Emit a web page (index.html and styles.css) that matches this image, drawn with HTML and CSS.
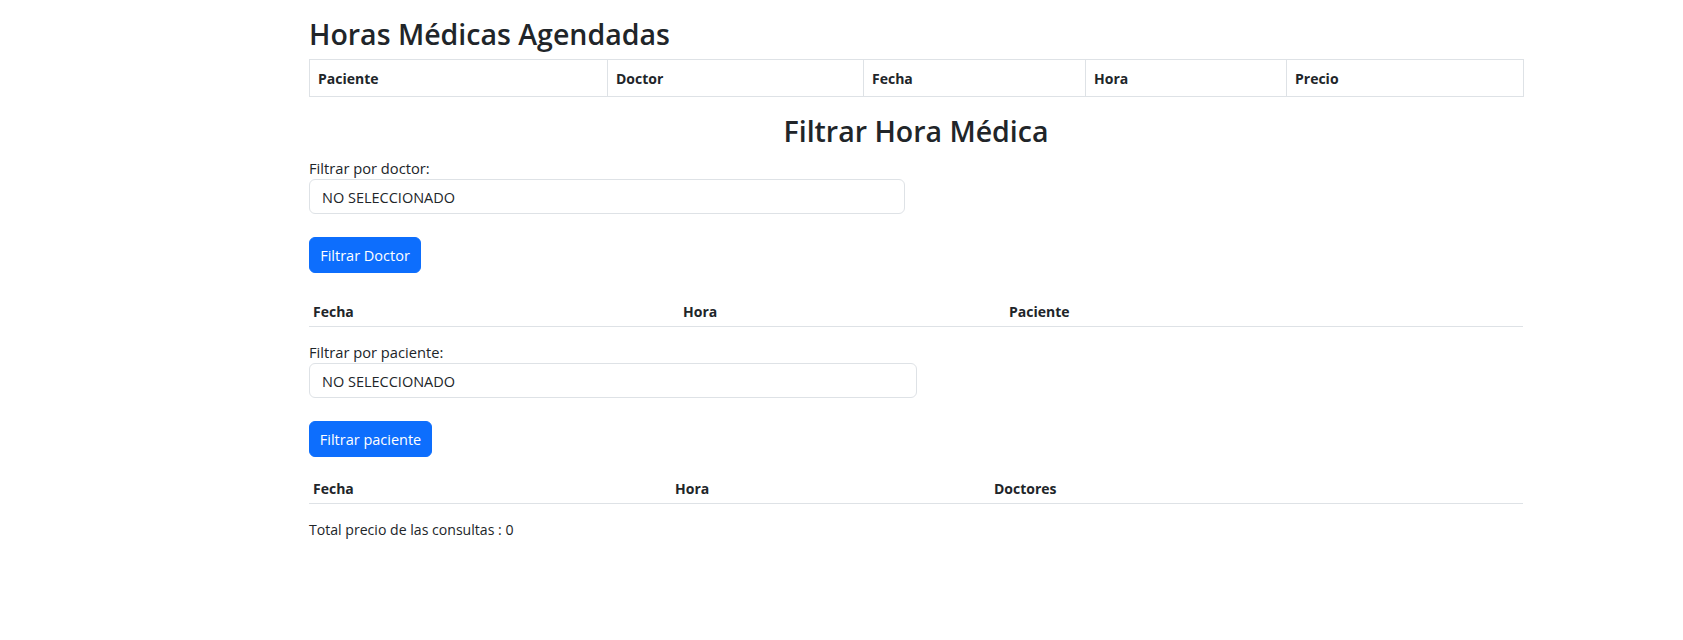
FILE: index.html
```html
<!DOCTYPE html>
<html lang="es">
<head>
<meta charset="utf-8">
<title>Horas Médicas</title>
<link rel="stylesheet" href="styles.css">
</head>
<body>
<div class="container">
  <h3 class="title">Horas Médicas Agendadas</h3>
  <table class="tbl tbl-bordered">
    <colgroup>
      <col class="c1"><col class="c2"><col class="c3"><col class="c4"><col class="c5">
    </colgroup>
    <thead>
      <tr><th>Paciente</th><th>Doctor</th><th>Fecha</th><th>Hora</th><th>Precio</th></tr>
    </thead>
  </table>

  <h2 class="subtitle">Filtrar Hora Médica</h2>

  <label class="lbl">Filtrar por doctor:</label>
  <div class="select select-doctor">NO SELECCIONADO</div>
  <button class="btn btn-doctor">Filtrar Doctor</button>

  <table class="tbl tbl-sm tbl-doctor">
    <colgroup>
      <col class="d1"><col class="d2"><col class="d3">
    </colgroup>
    <thead>
      <tr><th>Fecha</th><th>Hora</th><th>Paciente</th></tr>
    </thead>
  </table>

  <label class="lbl lbl-2">Filtrar por paciente:</label>
  <div class="select select-paciente">NO SELECCIONADO</div>
  <button class="btn btn-paciente">Filtrar paciente</button>

  <table class="tbl tbl-sm tbl-paciente">
    <colgroup>
      <col class="p1"><col class="p2"><col class="p3">
    </colgroup>
    <thead>
      <tr><th>Fecha</th><th>Hora</th><th>Doctores</th></tr>
    </thead>
  </table>

  <p class="total">Total precio de las consultas : 0</p>
</div>
</body>
</html>
```
FILE: styles.css
```css
* { box-sizing: border-box; }

html, body {
  margin: 0;
  padding: 0;
  background: #ffffff;
}

body {
  font-family: "Open Sans", "Noto Sans", "Liberation Sans", sans-serif;
  font-size: 14.5px;
  color: #212529;
}

.container {
  display: flex;
  flex-direction: column;
  align-items: flex-start;
  width: 1214px;
  margin-left: 309px;
}

.title {
  font-size: 28.5px;
  line-height: 34px;
  font-weight: 600;
  margin: 17px 0 8px 0;
}

.tbl {
  width: 100%;
  border-collapse: collapse;
  table-layout: fixed;
}

.tbl th {
  text-align: left;
  font-weight: 700;
  font-size: 14px;
  white-space: nowrap;
}

.tbl-bordered {
  border: 1px solid #dee2e6;
}

.tbl-bordered th {
  border: 1px solid #dee2e6;
  padding: 9px 8px 7px 8px;
  line-height: 20px;
}

.c1 { width: 298px; }
.c2 { width: 256px; }
.c3 { width: 222px; }
.c4 { width: 201px; }
.c5 { width: 237px; }

.subtitle {
  align-self: stretch;
  text-align: center;
  font-size: 28.5px;
  line-height: 34px;
  font-weight: 600;
  margin: 17px 0 9px 0;
}

.lbl {
  display: block;
  font-size: 14.7px;
  line-height: 22px;
}

.lbl-2 {
  margin-top: 14px;
}

.select {
  height: 35px;
  border: 1px solid #dee2e6;
  border-radius: 6px;
  padding: 1px 12px 0 12px;
  display: flex;
  align-items: center;
  font-size: 14.5px;
  color: #212529;
  background: #fff;
  white-space: nowrap;
}

.select-doctor { width: 596px; }
.select-paciente { width: 608px; }

.btn {
  margin-top: 23px;
  height: 36px;
  padding: 1px 0 0 0;
  border: 1px solid #0d6efd;
  border-radius: 6px;
  background: #0d6efd;
  color: #ffffff;
  font-family: inherit;
  font-size: 14.5px;
  line-height: 20px;
  text-align: center;
  white-space: nowrap;
  cursor: pointer;
}

.btn-doctor { width: 112px; }
.btn-paciente { width: 123px; }

.tbl-sm th {
  padding: 5px 4px 3px 4px;
  line-height: 22px;
  border-bottom: 1px solid #dee2e6;
}

.tbl-doctor { margin-top: 23px; }
.tbl-paciente { margin-top: 16px; }

.d1 { width: 370px; }
.d2 { width: 326px; }
.d3 { width: 518px; }

.p1 { width: 362px; }
.p2 { width: 319px; }
.p3 { width: 533px; }

.total {
  margin: 15px 0 0 0;
  font-size: 14.1px;
  line-height: 22px;
}
```
